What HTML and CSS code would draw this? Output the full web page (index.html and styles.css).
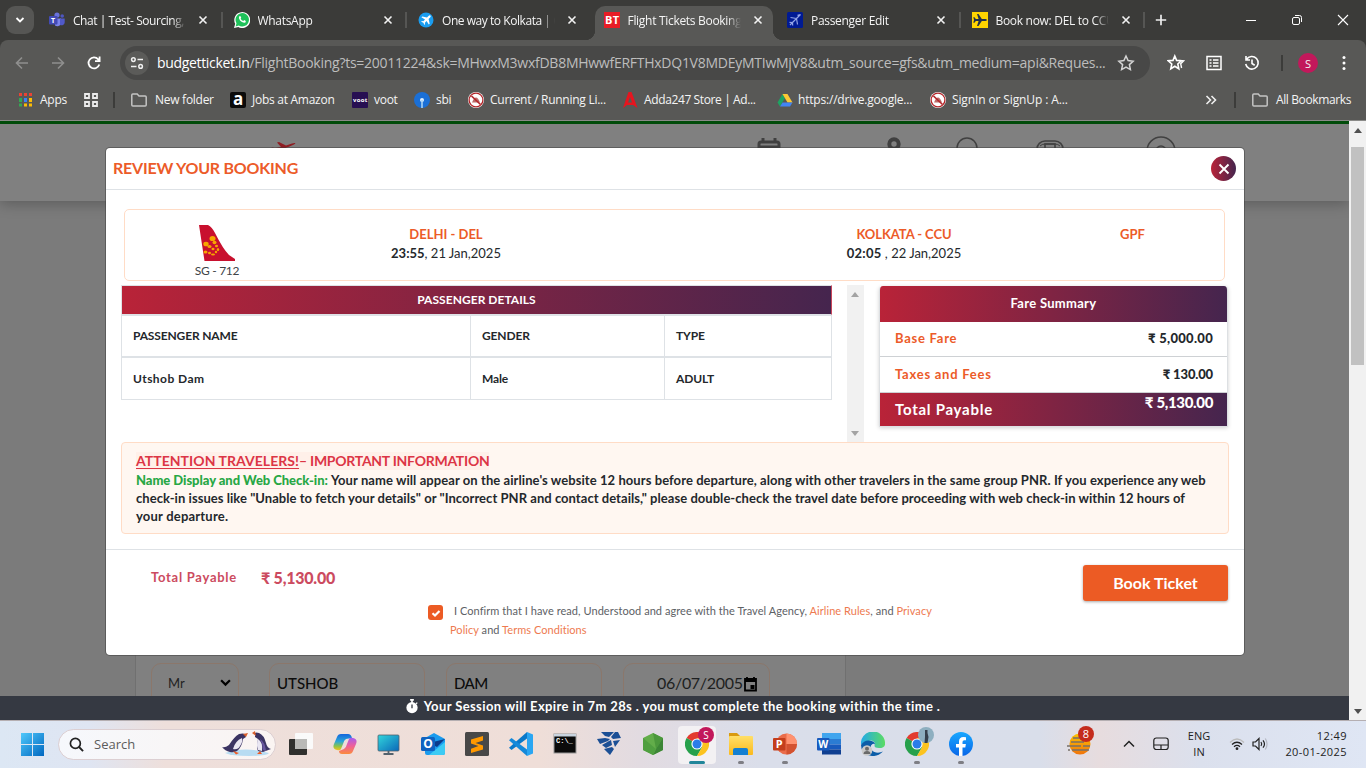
FILE: index.html
```html
<!DOCTYPE html>
<html lang="en">
<head>
<meta charset="utf-8">
<title>Flight Tickets Booking</title>
<link rel="stylesheet" href="styles.css">
</head>
<body>
<svg width="0" height="0" class="defs">
  <defs>
    <linearGradient id="gWin" x1="0" y1="0" x2="1" y2="1"><stop offset="0" stop-color="#4fc8fb"/><stop offset="1" stop-color="#0067c0"/></linearGradient>
    <linearGradient id="gPc" x1="0" y1="0" x2="1" y2="1"><stop offset="0" stop-color="#32d6dc"/><stop offset="1" stop-color="#0a67b8"/></linearGradient>
    <linearGradient id="gCopA" x1="0" y1="0" x2="0" y2="1"><stop offset="0" stop-color="#1465dd"/><stop offset=".45" stop-color="#2aa6d8"/><stop offset=".75" stop-color="#8cc34a"/><stop offset="1" stop-color="#f7c21d"/></linearGradient>
    <linearGradient id="gCopB" x1="0" y1="0" x2="0" y2="1"><stop offset="0" stop-color="#a55bf0"/><stop offset=".5" stop-color="#ee5f9a"/><stop offset="1" stop-color="#fb8c3c"/></linearGradient>
    <linearGradient id="gEdge" x1="0" y1="0" x2="1" y2="0"><stop offset="0" stop-color="#23a9e8"/><stop offset="1" stop-color="#5bdc62"/></linearGradient>
    <linearGradient id="gFolder" x1="0" y1="0" x2="0" y2="1"><stop offset="0" stop-color="#ffdf68"/><stop offset="1" stop-color="#fbb91c"/></linearGradient>
    <linearGradient id="gFb" x1="0" y1="0" x2="0" y2="1"><stop offset="0" stop-color="#19a8ff"/><stop offset="1" stop-color="#0866e8"/></linearGradient>
    <linearGradient id="gSun" x1="0" y1="0" x2="0" y2="1"><stop offset="0" stop-color="#fdc400"/><stop offset="1" stop-color="#f0740c"/></linearGradient>
    <symbol id="x" viewBox="0 0 10 10"><path d="M1.500 1.500l7 7M8.500 1.500l-7 7" stroke="#f2f2f2" stroke-width="1.600"/></symbol>
    <symbol id="folder" viewBox="0 0 16 14"><path d="M1.800 1h4.400l1.800 2h6.200q1 0 1 1v8q0 1-1 1H1.800q-1 0-1-1V2q0-1 1-1z" fill="none" stroke="#c4c4c3" stroke-width="1.500"/></symbol>
    <symbol id="ban" viewBox="0 0 16 16"><circle cx="8" cy="8" r="8" fill="#fff"/><circle cx="8" cy="8" r="6.900" fill="none" stroke="#b3262a" stroke-width="1.300"/><path d="M4 10.500q2-5 4-5t4 5z" fill="#bb6c6a"/><path d="M3.500 4l9 8.500" stroke="#b3262a" stroke-width="1.700"/></symbol>
    <symbol id="chrome" viewBox="0 0 24 24"><path d="M12 12L1.600 6A12 12 0 0 1 22.400 6z" fill="#e33b2e"/><path d="M12 12L1.600 6A12 12 0 0 0 12 24l5.200-9z" fill="#26a04b"/><path d="M12 24A12 12 0 0 0 22.400 6H12l5.200 9z" fill="#fcc31e"/><circle cx="12" cy="12" r="5.600" fill="#fff"/><circle cx="12" cy="12" r="4.500" fill="#2b7de9"/></symbol>
    <symbol id="star" viewBox="0 0 18 18"><path d="M9 2l2.100 4.600 5 .6-3.700 3.400 1 5L9 13.100l-4.400 2.500 1-5L1.900 7.200l5-.6z" fill="none" stroke="#d4d4d4" stroke-width="1.500"/></symbol>
  </defs>
</svg>

<div class="screen">
  <header class="browser">
    <div class="tabstrip">
      <div class="tab-search"><svg width="10" height="8" viewBox="0 0 10 8"><path d="M1.500 2l3.500 3.500L8.500 2" fill="none" stroke="#fff" stroke-width="1.800"/></svg></div>
      <div class="tab tight"><svg class="fav" viewBox="0 0 16 16"><circle cx="8" cy="3" r="2.600" fill="#6972dc"/><circle cx="13.200" cy="4" r="1.800" fill="#4e56c0"/><path d="M6 6.500h6v5a3.800 3.800 0 0 1-6 2z" fill="#7b83eb"/><path d="M11 6.500h4.700v4a3 3 0 0 1-4.700 2.300z" fill="#5059c9"/><rect y="4" width="8.500" height="8.500" rx="1" fill="#434bb5"/><text x="2" y="10.800" class="glyph g7">T</text></svg><span class="tab-title">Chat | Test- Sourcing,</span><svg class="tab-x"><use href="#x"/></svg></div>
      <div class="tab"><svg class="fav" viewBox="0 0 16 16"><path d="M0 16l1.200-4.200A8 8 0 1 1 4.300 15z" fill="#fff"/><path d="M1.600 14.400l.9-3.200a6.700 6.700 0 1 1 2.300 2.300z" fill="#1fc15a"/><path d="M5.300 4.300q.9-.9 1.400.3l.5 1.100-.6 1q1 1.700 2.700 2.300l.9-.9 1.600.8q.2 1.800-1.700 1.900-2.300-.1-4.100-2.200-2-2.300-.7-4.300z" fill="#fff"/></svg><span class="tab-title">WhatsApp</span><svg class="tab-x"><use href="#x"/></svg></div>
      <div class="tab nosep tight"><svg class="fav" viewBox="0 0 16 16"><circle cx="8" cy="8" r="7.500" fill="#1a9df0"/><path d="M12.500 3.500q-1-.6-2 .5L9 5.500 4.300 4.400l-.9.9L7 7.500 5.400 9.200l-1.600-.1-.6.6 2.200 1 1 2.200.6-.6-.1-1.600L8.600 9l2.200 3.600.9-.9-1.100-4.700 1.500-1.500q1.100-1 .4-2z" fill="#fff"/></svg><span class="tab-title">One way to Kolkata | C</span><svg class="tab-x"><use href="#x"/></svg></div>
      <div class="tab active nosep"><svg class="fav" viewBox="0 0 16 16"><rect width="16" height="16" fill="#e71d25"/><text x="1" y="12.300" class="glyph g11" textLength="14">BT</text></svg><span class="tab-title">Flight Tickets Booking</span><svg class="tab-x"><use href="#x"/></svg></div>
      <div class="tab"><svg class="fav" viewBox="0 0 16 16"><rect width="16" height="16" rx="1.500" fill="#001a93"/><path d="M13.500 2.500L3 13M9.500 6.500L3.500 5.500M9.500 6.500l1 6M5.500 10.500l-3-.2M5.500 10.500l.2 3M13.500 2.500l-3 .8" fill="none" stroke="#93a4e8" stroke-width="1.200"/></svg><span class="tab-title">Passenger Edit</span><svg class="tab-x"><use href="#x"/></svg></div>
      <div class="tab"><svg class="fav" viewBox="0 0 16 16"><rect width="16" height="16" fill="#ffd400"/><path d="M15 8q-.3-1-1.800-1H9.800L6.500 2H5l1.600 5H3.800L2.500 5.300H1.300L2 8l-.7 2.700h1.200L3.800 9h2.800L5 14h1.500l3.300-5h3.400Q14.700 9 15 8z" fill="#23304a"/></svg><span class="tab-title">Book now: DEL to CCU</span><svg class="tab-x"><use href="#x"/></svg></div>
      <svg class="new-tab" viewBox="0 0 12 12"><path d="M6 .8v10.400M.8 6h10.400" stroke="#eee" stroke-width="1.700"/></svg>
      <div class="win-controls">
        <svg viewBox="0 0 12 12"><path d="M1 6.500h10" stroke="#fff"/></svg>
        <svg viewBox="0 0 12 12"><rect x="1.500" y="3.500" width="7" height="7" rx="1.500" fill="none" stroke="#fff"/><path d="M4 1.500h4.500a2 2 0 0 1 2 2V8" fill="none" stroke="#fff"/></svg>
        <svg viewBox="0 0 12 12"><path d="M1 1l10 10M11 1L1 11" stroke="#fff" stroke-width="1.100"/></svg>
      </div>
    </div>

    <div class="toolbar">
      <div class="nav">
        <svg viewBox="0 0 16 16"><path d="M14 8H3M8 2.500L2.500 8 8 13.500" fill="none" stroke="#8f8f8e" stroke-width="1.600"/></svg>
        <svg viewBox="0 0 16 16"><path d="M2 8h11M8 2.500L13.500 8 8 13.500" fill="none" stroke="#8f8f8e" stroke-width="1.600"/></svg>
        <svg viewBox="0 0 16 16"><path d="M13.300 9.500A5.500 5.500 0 1 1 12.200 4.300L13.500 5.600M13.600 1.500v4.600H9" fill="none" stroke="#fff" stroke-width="1.800"/></svg>
      </div>
      <div class="omnibox">
        <span class="site-info"><svg viewBox="0 0 14 14"><g fill="none" stroke="#f0f0f0" stroke-width="1.500"><circle cx="3.400" cy="3.600" r="1.800"/><path d="M7.500 3.600H13M1 10.400h5.500"/><circle cx="10.600" cy="10.400" r="1.800"/></g></svg></span>
        <span class="url"><b>budgetticket.in</b><span>/FlightBooking?ts=20011224&amp;sk=MHwxM3wxfDB8MHwwfERFTHxDQ1V8MDEyMTIwMjV8&amp;utm_source=gfs&amp;utm_medium=api&amp;Reques...</span></span>
        <svg class="url-star"><use href="#star"/></svg>
      </div>
      <div class="actions">
        <svg viewBox="0 0 18 18"><path d="M7.800 2l1.800 4.400 4.700.4-3.500 3.200 1 4.700-4-2.500-4 2.500 1-4.700L1.300 6.800 6 6.400z" fill="none" stroke="#fff" stroke-width="1.600"/><path d="M12.500 6.500l4.300.3-3.100 3 .9 4.200" fill="none" stroke="#fff" stroke-width="1.400"/></svg>
        <svg viewBox="0 0 18 18"><rect x="2" y="2.500" width="14" height="13" fill="none" stroke="#fff" stroke-width="1.500"/><path d="M4.500 6h2M8 6h5.500M4.500 9h2M8 9h5.500M4.500 12h2M8 12h5.500" stroke="#fff" stroke-width="1.500"/></svg>
        <svg viewBox="0 0 18 18"><path d="M3.500 5.500A6.300 6.300 0 1 1 2.700 10M3 2v4h4M9 5.500v4l2.700 1.700" fill="none" stroke="#fff" stroke-width="1.600"/></svg>
        <i class="bar-sep"></i>
        <span class="avatar">S</span>
        <svg class="dots" viewBox="0 0 4 16"><circle cx="2" cy="2.500" r="1.500" fill="#fff"/><circle cx="2" cy="8" r="1.500" fill="#fff"/><circle cx="2" cy="13.500" r="1.500" fill="#fff"/></svg>
      </div>
    </div>

    <div class="bookmarks">
      <div class="bm bm-apps"><svg viewBox="0 0 13 14"><path d="M0 0h3v3H0zM5 0h3v3H5zM10 0h3v3h-3z" fill="#ea4335"/><path d="M0 5h3v4H0zM0 10.500h3v3H0z" fill="#34a853"/><path d="M5 5h3v4H5z" fill="#3b82f6"/><path d="M10 5h3v4h-3zM5 10.500h3v3H5zM10 10.500h3v3h-3z" fill="#fbbc05"/></svg>Apps</div>
      <div class="bm bm-grid"><svg viewBox="0 0 14 14"><path d="M1 1h4v4H1zM9 1h4v4H9zM1 9h4v4H1zM9 9h4v4H9z" fill="none" stroke="#ececec" stroke-width="1.800"/></svg><i class="bar-sep"></i></div>
      <div class="bm bm-fold"><svg><use href="#folder"/></svg>New folder</div>
      <div class="bm"><svg viewBox="0 0 16 16"><rect width="16" height="16" rx="2" fill="#0b0b0b"/><text x="3" y="13" class="glyph g18">a</text></svg>Jobs at Amazon</div>
      <div class="bm"><svg viewBox="0 0 16 16"><rect width="16" height="16" rx="1" fill="#270f52"/><text x="1" y="10" class="glyph g6" textLength="14">voot</text></svg>voot</div>
      <div class="bm"><svg viewBox="0 0 16 16"><circle cx="8" cy="8" r="8" fill="#1a6fd6"/><circle cx="8" cy="8" r="2" fill="#dff0ff"/><path d="M8 8v8" stroke="#a7d4f7" stroke-width="1.600"/></svg>sbi</div>
      <div class="bm"><svg><use href="#ban"/></svg>Current / Running Li...</div>
      <div class="bm bm-adda"><svg viewBox="0 0 16 16"><path d="M6.500 0h3L15.500 16l-4.500-3H5l-4 3z" fill="#e6151f"/><path d="M8 5l2 5.500H6z" fill="#585856"/></svg>Adda247 Store | Ad...</div>
      <div class="bm bm-drive"><svg viewBox="0 0 16 16"><path d="M5.500 2L.5 10.500 3 14.500 8 6z" fill="#1da462"/><path d="M5.500 2h5l5 8.500h-5z" fill="#fcc934"/><path d="M3 14.500l2.500-4h10l-2.500 4z" fill="#4285f4"/></svg>https://drive.google...</div>
      <div class="bm bm-sign"><svg><use href="#ban"/></svg>SignIn or SignUp : A...</div>
      <div class="bm bm-more"><svg viewBox="0 0 12 10"><path d="M1.500 1l4 4-4 4M6.500 1l4 4-4 4" fill="none" stroke="#eee" stroke-width="1.600"/></svg><i class="bar-sep"></i></div>
      <div class="bm bm-fold all"><svg><use href="#folder"/></svg>All Bookmarks</div>
    </div>
  </header>

  <main class="viewport">
    <div class="page">
      <div class="site-header">
        <svg class="brand" viewBox="0 0 30 16"><path d="M7 1.500l2-.5 7 3.500 6-2q3-.8 3.500-.2-1 1.200-6 3.200L10 9 0 8l2-1.500 3 .5 6-1z" fill="#8e1d22"/></svg>
        <svg class="hi hi1" viewBox="0 0 24 20"><path d="M6 0v5M18 0v5" stroke="#404040" stroke-width="3"/><rect x="2" y="4" width="20" height="18" rx="2" fill="none" stroke="#404040" stroke-width="3"/><path d="M2 9h20" stroke="#404040" stroke-width="3"/></svg>
        <svg class="hi hi2" viewBox="0 0 14 20"><circle cx="7" cy="7" r="4.700" fill="none" stroke="#404040" stroke-width="4"/></svg>
        <svg class="hi hi3" viewBox="0 0 24 24"><circle cx="12" cy="11" r="10" fill="none" stroke="#404040" stroke-width="1.500"/></svg>
        <svg class="hi hi4" viewBox="0 0 28 20"><rect x="1" y="1" width="26" height="22" rx="8" fill="none" stroke="#404040" stroke-width="1.600"/><rect x="9" y="4" width="10" height="16" fill="none" stroke="#404040" stroke-width="1.600"/><path d="M4 6q2-2 5-2h10q3 0 5 2" fill="none" stroke="#404040"/></svg>
        <svg class="hi hi5" viewBox="0 0 30 26"><circle cx="15" cy="15" r="14" fill="none" stroke="#404040" stroke-width="1.500"/><circle cx="15" cy="15" r="5" fill="none" stroke="#404040" stroke-width="1.500"/></svg>
      </div>
      <div class="traveller-form">
        <div class="field f-title">Mr<svg viewBox="0 0 10 7"><path d="M1 1l4 4 4-4" fill="none" stroke="#000" stroke-width="2"/></svg></div>
        <div class="field f-first">UTSHOB</div>
        <div class="field f-last">DAM</div>
        <div class="field f-dob">06/07/2005<svg viewBox="0 0 14 16"><path d="M1.500 3h11v11.500h-11zM1 5h12M3.500 1v3M10.500 1v3" fill="none" stroke="#000" stroke-width="1.800"/><rect x="7" y="9" width="4" height="4"/></svg></div>
      </div>
      <div class="session"><svg viewBox="0 0 14 16"><circle cx="7" cy="9.200" r="6" fill="#fff"/><path d="M5 1h4M7 1v3M11.500 4l1 1" stroke="#fff" stroke-width="1.800"/><path d="M7 5.800v4" stroke="#353942" stroke-width="1.400"/></svg>Your Session will Expire in 7m 28s . you must complete the booking within the time .</div>

      <section class="modal">
        <div class="modal-head"><h1>REVIEW YOUR BOOKING</h1><span class="close"><svg viewBox="0 0 12 12"><path d="M1.500 1.500l9 9M10.500 1.500l-9 9" stroke="#fff" stroke-width="1.900"/></svg></span></div>
        <div class="modal-body">
          <div class="flight">
            <div class="airline">
              <svg viewBox="0 0 36 36"><path d="M0 0h9q4 2 7 8 8 16 14 22l6 4v2H5.500z" fill="#c8102e"/><g fill="#f7a600"><ellipse cx="13.500" cy="13.500" rx="3" ry="2.600"/><ellipse cx="7" cy="19" rx="2.700" ry="2.300"/><ellipse cx="15.500" cy="17.500" rx="2" ry="1.700"/><ellipse cx="10.500" cy="21.500" rx="2" ry="1.600"/><ellipse cx="17.500" cy="21" rx="1.500" ry="1.300"/><ellipse cx="14" cy="24" rx="1.500" ry="1.300"/><ellipse cx="6.500" cy="27" rx="2" ry="1.600"/><ellipse cx="19" cy="24.500" rx="1.200" ry="1.500"/><ellipse cx="10.500" cy="28" rx="1.500" ry="1.200"/><ellipse cx="17" cy="27" rx="1.200" ry="1.200"/><ellipse cx="14" cy="29.500" rx="2" ry="1"/></g></svg>
              <span>SG - 712</span>
            </div>
            <div class="leg depart"><b>DELHI - DEL</b><span><strong>23:55</strong>, 21 Jan,2025</span></div>
            <div class="leg arrive"><b>KOLKATA - CCU</b><span><strong>02:05</strong> , 22 Jan,2025</span></div>
            <div class="leg fare-type"><b>GPF</b></div>
          </div>

          <div class="details">
            <div class="pax">
              <div class="pax-head">PASSENGER DETAILS</div>
              <div class="pax-row head"><span>PASSENGER NAME</span><span>GENDER</span><span>TYPE</span></div>
              <div class="pax-row"><span class="loose">Utshob Dam</span><span>Male</span><span>ADULT</span></div>
            </div>
            <div class="inner-scroll"><i class="up"></i><i class="down"></i></div>
            <div class="fare">
              <div class="fare-head">Fare Summary</div>
              <div class="fare-row"><span>Base Fare</span><b class="wide">₹ 5,000.00</b></div>
              <div class="fare-row"><span>Taxes and Fees</span><b>₹ 130.00</b></div>
              <div class="fare-total"><span>Total Payable</span><b>₹ 5,130.00</b></div>
            </div>
          </div>

          <div class="notice">
            <h2><span><u>ATTENTION TRAVELERS!</u><em>– IMPORTANT INFORMATION</em></span></h2>
            <p><b>Name Display and Web Check-in:</b> <span>Your name will appear on the airline's website 12 hours before departure, along with other travelers in the same group PNR. If you experience any web</span><br>check-in issues like "Unable to fetch your details" or "Incorrect PNR and contact details," please double-check the travel date before proceeding with web check-in within 12 hours of<br><span class="last">your departure.</span></p>
          </div>
        </div>
        <div class="modal-foot">
          <div class="pay"><span>Total Payable</span><b>₹ 5,130.00</b></div>
          <div class="agree">
            <span class="check"><svg viewBox="0 0 10 10"><path d="M1.500 5.200l2.500 2.300L8.500 3" fill="none" stroke="#fff" stroke-width="2.200"/></svg></span>
            <p><i></i>I Confirm that I have read, Understood and agree with the Travel Agency, <a>Airline Rules</a>, and <a>Privacy</a><br><a>Policy</a> and <a>Terms Conditions</a></p>
          </div>
          <div class="book">Book Ticket</div>
        </div>
      </section>
    </div>
    <div class="page-scroll"><i class="up"></i><i class="thumb"></i><i class="down"></i></div>
  </main>

  <footer class="taskbar">
    <svg class="start" viewBox="0 0 23 23"><path d="M0 0h11v11H0zM12 0h11v11H12zM0 12h11v11H0zM12 12h11v11H12z" fill="url(#gWin)"/></svg>
    <div class="search"><svg class="lens" viewBox="0 0 16 16"><circle cx="6.800" cy="6.800" r="5.300" fill="none" stroke="#222" stroke-width="1.800"/><path d="M10.700 10.700L15 15" stroke="#222" stroke-width="2"/></svg><span>Search</span>
      <svg class="penguins" viewBox="0 0 50 26"><path d="M3 22q20-7 44 0-2 3-20 3-18 0-24-3z" fill="#b8dcf2"/><path d="M0 16q3 1 7-2 5-8 10-11 4-1 6 0l1 3-3 2q-1 8-6 12-4 2-7 1-5-1-8-5z" fill="#3b3463"/><path d="M20 7q-7 3-9 11 5 1 7-3 3-4 2-8z" fill="#e9e6f2"/><path d="M21 3l5-1-2 4z" fill="#d95f2b"/><path d="M11 20l6 2-3 1.500zM38 20l-3 3h5z" fill="#ef5b25"/><path d="M49 18q-4-1-5-6-2-8-7-10-3-1-4 0v4l3 2q-2 9 0 12l5 1z" fill="#3b3463"/><path d="M36 8q5 3 4 12l-4-1q-2-5 0-11z" fill="#e9e6f2"/><path d="M38 8q5 3 6 12l-3-1q0-6-3-11z" fill="#6956a0"/><path d="M34 5l-4-3 3-2z" fill="#d95f2b"/></svg>
    </div>
    <div class="apps">
      <span class="app"><svg viewBox="0 0 24 24"><rect x="6" y="1" width="18" height="16" rx="1" fill="#fafafa"/><rect y="7" width="18" height="16" rx="1" fill="#30302e"/><rect x="6" y="7" width="12" height="10" fill="#b9b9b7"/></svg></span>
      <span class="app"><svg viewBox="0 0 24 24"><path d="M8 2h7q3 0 4 4l-6 1q-2 1-3 5l-2 5q-1 2-4 1-5-1-3-6l3-7q1-3 4-3z" fill="url(#gCopA)"/><path d="M16 22H9q-3 0-3-3l5-2q2-1 3-5l2-5q1-2 4-1 5 1 3 6l-3 7q-1 3-4 3z" fill="url(#gCopB)"/></svg></span>
      <span class="app"><svg viewBox="0 0 24 24"><rect x="1" y="3" width="21" height="16" rx="1" fill="url(#gPc)" stroke="#53616c" stroke-width=".8"/><path d="M11.500 19v3M6.500 22h10" stroke="#53616c" stroke-width="1.800"/></svg></span>
      <span class="app"><svg viewBox="0 0 24 24"><path d="M4 6l9-5 11 6v14q0 2-2 2H6q-2 0-2-2z" fill="#1a9bee"/><path d="M8 11l16-4-8 8z" fill="#0b3c8c"/><path d="M8 23l16-13v11q0 2-2 2z" fill="#3ccbf4"/><rect y="5" width="14" height="14" rx="1.500" fill="#0f63c0"/><text x="2.300" y="16.300" class="glyph g12">O</text></svg></span>
      <span class="app"><svg viewBox="0 0 24 24"><rect width="24" height="24" rx="1.500" fill="#484848"/><path d="M18 4v4.500L10.500 11l7.500 2.500v4L6 21v-4.300l7.500-2.600L6 11.600V7.500z" fill="#ff9800"/></svg></span>
      <span class="app"><svg viewBox="0 0 24 24"><path d="M18 0l6 2.500v19L18 24V0z" fill="#2aa6f2"/><path d="M18 0v6.500L2.500 18 0 15.800z" fill="#0a79c9"/><path d="M18 24v-6.500L2.500 6 0 8.200z" fill="#1489da"/></svg></span>
      <span class="app"><svg viewBox="0 0 24 24"><rect x="1" y="2" width="22" height="19" fill="#0b0b0b" stroke="#989898"/><path d="M1 2h22v2.500H1z" fill="#c9d4df"/><text x="3" y="11" class="glyph mono">C:\_</text></svg></span>
      <span class="app"><svg viewBox="0 0 24 24"><path d="M4 0h13l-5 5-4-1zM18 0h3l3 6-8 1-2-2zM0 7l8-1 5 1-2 2-8 3zM12 9l2-1 1 5-6 3-4-3zM16 9l7-1-5 7zM7 17l8-2 2 2-4 6z" fill="#1b4f95"/></svg></span>
      <span class="app"><svg viewBox="0 0 24 24"><path d="M12 1l10 5v12l-10 5-10-5V6z" fill="#62ad4a"/><path d="M12 1l10 5-7 11z" fill="#4b983c"/><path d="M22 6v12l-10 5 3-6z" fill="#3c8636"/><path d="M2 6l13 11-3 6-10-5z" fill="#4f9f40"/></svg></span>
      <span class="app current"><svg><use href="#chrome"/></svg><em class="pin">S</em></span>
      <span class="app open"><svg viewBox="0 0 24 24"><path d="M0 1h8l3 3v4H0z" fill="#d99a10"/><rect y="4" width="24" height="19" rx="1" fill="url(#gFolder)"/><path d="M4 23v-5q0-2 2-2h11q2 0 2 2v5z" fill="#1480d2"/></svg></span>
      <span class="app open"><svg viewBox="0 0 24 24"><circle cx="13.500" cy="12" r="10.500" fill="#ea6c4a"/><path d="M13.500 1.500A10.500 10.500 0 0 1 24 12H13.500z" fill="#ff9270"/><path d="M13.500 12H24a10.500 10.500 0 0 1-10.500 10.500z" fill="#d35230"/><rect y="6" width="12.500" height="12.500" rx="1" fill="#c43e1c"/><text x="2.800" y="16" class="glyph g11">P</text></svg></span>
      <span class="app"><svg viewBox="0 0 24 24"><rect x="5" y="1" width="19" height="6" fill="#41a5ee"/><rect x="5" y="7" width="19" height="5.500" fill="#2b7cd3"/><rect x="5" y="12.500" width="19" height="5" fill="#185abd"/><rect x="5" y="17.500" width="19" height="5" fill="#103f91"/><rect y="6" width="12.500" height="12.500" rx="1" fill="#185abd"/><text x="1.300" y="15.800" class="glyph g11" textLength="10" lengthAdjust="spacingAndGlyphs">W</text></svg></span>
      <span class="app"><svg viewBox="0 0 24 24"><path d="M0 13A12 12 0 0 1 24 10q1 6-6 6-6 0-4-4-1-5-7-3-5 1-7 4z" fill="url(#gEdge)"/><path d="M0 13q3-5 8-4.500 6 .5 6 4-2-2-4 1-1 6 5 7 4 .500 7-1-5 5-11 4.500Q0 23 0 13z" fill="#0c5da8"/><circle cx="6" cy="18.500" r="5.300" fill="#c9c9c9"/><circle cx="6" cy="16.800" r="2" fill="#6a6a6a"/><path d="M2.500 22q0-3 3.500-3t3.500 3z" fill="#6a6a6a"/></svg></span>
      <span class="app open"><svg><use href="#chrome"/></svg><em class="pin photo"><svg viewBox="0 0 16 16"><path d="M7 3h2.500v3l1 4-1 6H6.500l.5-6z" fill="#36404c"/></svg></em></span>
      <span class="app open"><svg viewBox="0 0 24 24"><circle cx="12" cy="12" r="12" fill="url(#gFb)"/><path d="M10 24v-8.500H7V12h3V9.500Q10 5 14.500 5l2.500.2v3h-1.700q-1.800 0-1.800 1.800v2h3.400l-.6 3.500h-2.800V24z" fill="#fff"/></svg></span>
    </div>
    <div class="tray">
      <span class="weather"><svg viewBox="0 0 24 24"><circle cx="13" cy="12" r="10.500" fill="url(#gSun)"/><path d="M6 6h10M4 10h13M0 14h14M6 14M5 18h17M1 18h2M16 14h7" stroke="#77706a" stroke-width="1.700"/></svg><em>8</em></span>
      <svg class="chev" viewBox="0 0 12 8"><path d="M1 6.500l5-5 5 5" fill="none" stroke="#222" stroke-width="1.500"/></svg>
      <svg class="pad" viewBox="0 0 16 14"><rect x=".8" y="1" width="14.400" height="11.500" rx="2.500" fill="none" stroke="#222" stroke-width="1.200"/><path d="M1 8h14M8 8v4.500" stroke="#222" stroke-width="1.200"/></svg>
      <div class="lang">ENG<br>IN</div>
      <svg class="wifi" viewBox="0 0 16 14"><path d="M1 5.500q7-7 14 0" fill="none" stroke="#bbb" stroke-width="1.200"/><path d="M3 7.500q5-4.500 10 0M5 9.700q3-2.500 6 0" fill="none" stroke="#222" stroke-width="1.300"/><circle cx="8" cy="11.700" r="1.400" fill="#222"/></svg>
      <svg class="vol" viewBox="0 0 16 14"><path d="M1 5h2.500L7 1.500v11L3.500 9H1z" fill="none" stroke="#222" stroke-width="1.200"/><path d="M9 5q1.500 2 0 4M11 3.300q3 3.700 0 7.400" fill="none" stroke="#222" stroke-width="1.200"/><path d="M13.300 1.500q3.500 5.500 0 11" fill="none" stroke="#b5b8c2" stroke-width="1.200"/></svg>
      <div class="clock">12:49<br>20-01-2025</div>
    </div>
  </footer>
</div>
</body>
</html>
```
FILE: styles.css
```css
* { box-sizing: border-box; }
body { margin: 0; }
svg { display: block; flex: none; }
.defs { position: absolute; }
i, em { font-style: normal; }
.screen { width: 1366px; height: 768px; overflow: hidden; display: flex; flex-direction: column; font-family: "Open Sans", "Noto Sans", sans-serif; font-size: 12px; }
.glyph { font-family: "Open Sans", sans-serif; font-weight: 700; fill: #fff; }
.g6 { font-size: 6px; }
.g7 { font-size: 7px; }
.g11 { font-size: 11px; }
.g12 { font-size: 12px; }
.g18 { font-size: 17px; }
.mono { font-family: "Liberation Mono", monospace; font-size: 7px; }

/* browser chrome */
.browser { height: 121px; flex: none; background: #3b3b39; color: #f4f4f4; }
.tabstrip { height: 40px; display: flex; align-items: center; padding-left: 6px; }
.tab-search { width: 28px; height: 28px; margin-right: 4px; border-radius: 9px; background: #565654; display: grid; place-items: center; }
.tab { width: 184.5px; height: 40px; padding-left: 11px; display: flex; align-items: center; position: relative; }
.tab::after { content: ""; position: absolute; right: 0; top: 12px; width: 2px; height: 16px; background: #565654; }
.tab.nosep::after { display: none; }
.tab.active { padding-left: 12px; }
.fav { width: 16px; height: 16px; position: relative; }
.tab-title { width: 113px; margin-left: 8px; overflow: hidden; position: relative; white-space: nowrap; letter-spacing: -.3px; -webkit-mask-image: linear-gradient(90deg, #000 88%, transparent); mask-image: linear-gradient(90deg, #000 88%, transparent); }
.tight .tab-title { letter-spacing: -.45px; }
.tab-x { width: 10px; height: 10px; margin-left: 12px; position: relative; }
.tab.active { z-index: 0; }
.tab.active::before { content: ""; position: absolute; z-index: -1; left: 3px; right: 3px; top: 6px; bottom: 0; background: #585856; border-radius: 10px 10px 0 0; }
.tab.active::after { display: block; left: -7px; right: -7px; top: 30px; width: auto; height: 10px; z-index: -1; background: radial-gradient(circle at 0 0, transparent 10px, #585856 10.5px) left / 10px 10px no-repeat, radial-gradient(circle at 100% 0, transparent 10px, #585856 10.5px) right / 10px 10px no-repeat; }
.new-tab { width: 12px; height: 12px; margin-left: 10px; }
.win-controls { margin-left: auto; display: flex; gap: 34px; padding-right: 17px; }
.win-controls svg { width: 12px; height: 12px; }
.toolbar { height: 44px; background: #585856; border-radius: 8px 8px 0 0; display: flex; align-items: center; padding-top: 2px; }
.nav { width: 120px; display: flex; gap: 20px; padding-left: 14px; }
.nav svg { width: 16px; height: 16px; }
.omnibox { width: 1030px; height: 34px; border-radius: 17px; background: #484847; display: flex; align-items: center; padding: 0 15px 0 5px; }
.site-info { width: 24px; height: 24px; border-radius: 50%; background: #5b5b59; display: grid; place-items: center; }
.site-info svg { width: 14px; height: 14px; }
.url { margin-left: 8px; padding-bottom: 1px; font-size: 14px; white-space: nowrap; color: #bdbdbd; letter-spacing: -.26px; display: flex; }
.url b { font-weight: 400; color: #fff; letter-spacing: -.33px; }
.url-star { width: 18px; height: 18px; margin-left: auto; }
.actions { display: flex; align-items: center; flex: 1; padding-left: 17px; }
.actions svg { width: 18px; height: 18px; margin-right: 20px; }
.bar-sep { width: 2px; height: 16px; background: #3c3c3a; }
.avatar { width: 20px; height: 20px; margin: 0 0 0 15px; border-radius: 50%; background: #c2185b; display: grid; place-items: center; font-size: 11px; }
.actions .dots { width: 4px; height: 16px; margin: 0 0 0 24px; }
.bookmarks { height: 37px; padding: 0 0 5px 19px; background: #585856; border-bottom: 1px solid #8a8a88; display: grid; grid-template-columns: 65px 47px 99px 122px 62px 54px 154px 155px 153px 275px 47px 1fr; align-items: center; letter-spacing: -.27px; white-space: nowrap; }
.bm { display: flex; align-items: center; gap: 6px; }
.bm svg { width: 16px; height: 16px; }
.bm-apps { gap: 8px; }
.bm-apps svg { width: 13px; height: 14px; }
.bm-grid { gap: 15px; }
.bm-grid svg { width: 14px; height: 14px; }
.bm-fold { gap: 8px; }
.bm-fold svg { height: 14px; }
.bm-adda { letter-spacing: -.38px; }
.bm-drive { gap: 5px; letter-spacing: -.2px; }
.bm-sign { letter-spacing: -.12px; }
.bm-more { gap: 17px; }
.bm-more svg { width: 12px; height: 10px; }
.all { letter-spacing: -.38px; }

/* page */
.viewport { height: 599px; flex: none; display: flex; }
.page { width: 1349px; position: relative; overflow: hidden; background: #7b7b7b; border-top: 3px solid #004b09; font-family: Lato, "Noto Sans", sans-serif; display: flex; flex-direction: column; }
.site-header { height: 77px; flex: none; background: #808080; box-shadow: 0 2px 14px rgba(0, 0, 0, .28); display: flex; align-items: flex-start; }
.brand { width: 30px; height: 16px; margin: 17px 0 0 270px; }
.hi1 { width: 24px; height: 20px; margin: 14px 0 0 457px; }
.hi2 { width: 14px; height: 20px; margin: 13px 0 0 106px; }
.hi3 { width: 24px; height: 24px; margin: 13px 0 0 54px; }
.hi4 { width: 28px; height: 20px; margin: 16px 0 0 57px; }
.hi5 { width: 30px; height: 26px; margin: 12px 0 0 82px; }
.traveller-form { width: 711px; height: 140px; flex: none; margin: 431px 0 0 135px; padding: 30px 0 0 15px; background: #808080; border: 1px solid #707070; display: flex; color: #0c0c0c; font-size: 15px; font-weight: 700; }
.session { position: absolute; left: 0; right: 0; bottom: 0; height: 24px; padding: 0 4px 4px 0; background: #353942; color: #fff; display: flex; justify-content: center; align-items: center; gap: 5px; font-size: 13px; font-weight: 700; letter-spacing: .39px; }
.session svg { width: 14px; height: 15px; }
.field { height: 46px; border: 1px solid #8b776b; border-radius: 10px; display: flex; align-items: center; padding-bottom: 7px; font-weight: 500; }
.f-title { width: 88px; padding-left: 16px; justify-content: space-between; padding-right: 7px; font-size: 13px; font-weight: 400; color: #222; }
.f-title svg { width: 11px; height: 8px; }
.f-first { width: 156px; margin-left: 30px; padding-left: 7px; }
.f-last { width: 156px; margin-left: 21px; padding-left: 7px; letter-spacing: -.5px; }
.f-dob { width: 147px; margin-left: 21px; padding-left: 33px; font-size: 16px; font-weight: 400; letter-spacing: -.3px; color: #1d1f21; }
.f-dob svg { width: 15px; height: 16px; margin-top: 3px; }

/* modal */
.modal { position: absolute; left: 106px; top: 24px; width: 1138px; height: 507px; background: #fff; border-radius: 4px; box-shadow: 0 0 0 1px rgba(60, 60, 60, .5); color: #24282c; }
.modal-head { height: 42px; border-bottom: 1px solid #dee2e6; display: flex; align-items: center; justify-content: space-between; padding: 0 8px 0 7px; }
h1 { margin: 0 0 2px; font-size: 16px; line-height: 20px; letter-spacing: -.22px; color: #ec5b29; }
.close { width: 25px; height: 25px; border-radius: 50%; background: linear-gradient(90deg, #b92338, #45254e); display: grid; place-items: center; }
.close svg { width: 12px; height: 12px; }
.modal-body { padding: 19px 15px 0; height: 359px; }
.flight { width: 1101px; height: 72px; margin: 0 0 4px 3px; border: 1px solid #ffdcc6; border-radius: 5px; display: grid; grid-template-columns: 184px 274px 184px 274px 183px; }
.airline { padding-top: 15px; text-align: center; font-size: 12px; line-height: 19px; letter-spacing: -.3px; color: #404448; }
.airline svg { width: 36px; height: 36px; margin: 0 auto; }
.leg { padding-top: 15px; display: flex; flex-direction: column; align-items: center; font-size: 13px; line-height: 19px; white-space: nowrap; }
.leg b { color: #ec5b29; }
.arrive { grid-column: 4; }
.arrive b { letter-spacing: -.08px; }
.arrive strong { letter-spacing: .25px; }
.details { height: 157px; display: flex; }
.pax { width: 711px; font-size: 12px; font-weight: 700; }
.pax-head { height: 30px; border: 1px solid #dee2e6; border-right-color: #c9455a; background: linear-gradient(90deg, #b92338, #45254e); color: #fff; text-align: center; line-height: 28px; letter-spacing: .04px; }
.pax-row { height: 42px; border: 1px solid #dee2e6; border-top-width: 0; display: grid; grid-template-columns: 349px 194px 1fr; align-items: stretch; }
.pax-row.head { height: 43px; border-top-width: 1px; border-bottom-width: 2px; }
.pax-row span { padding-left: 11px; line-height: 41px; border-right: 1px solid #dee2e6; letter-spacing: -.15px; }
.pax-row.head span { line-height: 39px; }
.pax-row span:last-child { border: 0; }
.pax-row .loose { letter-spacing: .45px; }
.inner-scroll { width: 17px; margin-left: 15px; background: #f1f1f1; display: flex; flex-direction: column; justify-content: space-between; align-items: center; padding: 7px 1px 6px 0; }
.up, .down { border: 4px solid transparent; border-top: 0; border-bottom: 5px solid #a3a3a3; width: 0; height: 0; }
.down { border-bottom: 0; border-top: 5px solid #a3a3a3; }
.fare { width: 349px; height: 141px; margin: 1px 0 0 15px; border: 1px solid #dde0e3; border-top: 0; border-radius: 4px 4px 0 0; overflow: hidden; box-shadow: 0 1px 4px rgba(0, 0, 0, .18); font-size: 13px; font-weight: 700; }
.fare-head { height: 36px; line-height: 34px; text-align: center; background: linear-gradient(90deg, #b92338, #45254e); color: #fff; letter-spacing: .3px; }
.fare-row { height: 35px; padding: 0 14px 0 15px; display: flex; justify-content: space-between; border-bottom: 1px solid #ced1d4; line-height: 33px; }
.fare-row + .fare-row { height: 36px; line-height: 34px; }
.fare-row span { color: #ec5b29; letter-spacing: .75px; }
.fare-row b { letter-spacing: -.15px; }
.fare-row .wide { letter-spacing: .3px; }
.fare-total { height: 34px; padding: 0 14px 0 15px; display: flex; justify-content: space-between; background: linear-gradient(90deg, #b92338, #45254e); color: #fff; font-size: 15px; line-height: 33px; }
.fare-total span { letter-spacing: .74px; }
.fare-total b { line-height: 18px; letter-spacing: -.34px; }
.notice { height: 92px; border: 1px solid #ffdcc6; border-radius: 4px; background: #fff7f1; padding: 9px 0 0 14px; }
h2 { margin: 0; font-size: 14px; line-height: 18px; color: #dc3545; }
h2 span { display: inline-block; background: #fff0e9; }
h2 em { letter-spacing: -.27px; }
h2 u { letter-spacing: .05px; text-underline-offset: 2px; }
.notice p { margin: 1px 0 0; font-size: 13px; line-height: 18px; font-weight: 700; letter-spacing: .043px; white-space: nowrap; }
.notice p b { color: #28a745; letter-spacing: -.05px; }
.notice p span { letter-spacing: .075px; }
.notice p .last { letter-spacing: .2px; }
.modal-foot { height: 106px; border-top: 1px solid #dee2e6; display: grid; grid-template-columns: 322px 655px 145px; }
.pay { padding: 15px 0 0 45px; display: flex; font-size: 13px; line-height: 25px; font-weight: 700; color: #cc4b60; }
.pay span { width: 110px; letter-spacing: .73px; }
.pay b { font-size: 16px; letter-spacing: -.23px; }
.agree { display: flex; padding-top: 51px; gap: 7px; }
.check { width: 15px; height: 15px; margin-top: 4px; border-radius: 3px; background: #ec5b24; display: grid; place-items: center; }
.check svg { width: 10px; height: 10px; }
.agree p { margin: 0; font-size: 11px; line-height: 19px; letter-spacing: .05px; color: #5d6165; }
.agree p i { display: inline-block; width: 4px; }
.agree a { color: #ee7a50; }
.book { height: 36px; margin-top: 15px; border-radius: 3px; background: #ec5b24; box-shadow: 0 1px 3px rgba(0, 0, 0, .35); color: #fff; text-align: center; font-size: 16px; font-weight: 700; line-height: 35px; }
.page-scroll { width: 17px; background: #f1f1f1; display: flex; flex-direction: column; align-items: center; padding: 7px 0 6px; }
.page-scroll .up { border-bottom-color: #505050; }
.page-scroll .thumb { width: 13px; height: 218px; margin-top: 14px; background: #c1c1c1; }
.page-scroll .down { margin-top: auto; border-top-color: #505050; }

/* taskbar */
.taskbar { height: 48px; flex: none; border-top: 1px solid #b5afb2; background: linear-gradient(90deg, #dce7f4 0, #dfe5f2 90px, #eedfdb 165px, #efded8 540px, #e2dbe1 640px, #dadeea 760px, #d9deea 1040px, #e7dcde 1100px, #dbe0ed 1200px, #dfe6f4 1366px); display: flex; align-items: center; color: #222; }
.start { width: 23px; height: 23px; margin-left: 21px; }
.search { width: 218px; height: 31px; margin: 0 0 1px 14px; border-radius: 16px; background: linear-gradient(90deg, #f6f8fc, #faf4f2); border: 1px solid #dccfd2; display: flex; align-items: center; padding: 0 3px 0 10px; font-size: 13px; color: #5c5c5c; }
.lens { width: 15px; height: 15px; margin-right: 10px; }
.penguins { width: 50px; height: 26px; margin-left: auto; }
.apps { display: flex; margin: 0 0 1px 3px; }
.app { width: 44px; height: 47px; display: grid; place-items: center; position: relative; }
.app > svg { width: 24px; height: 24px; }
.open::after, .current::after { content: ""; position: absolute; bottom: 4px; left: 19px; width: 6px; height: 3px; border-radius: 2px; background: #7e7e84; }
.current::before { content: ""; position: absolute; left: 3px; top: 5px; width: 38px; height: 38px; border-radius: 4px; background: #f3f1f3; }
.current > svg { position: relative; }
.current::after { left: 14px; width: 16px; background: #21869a; }
.pin { position: absolute; left: 23px; top: 6px; width: 16px; height: 16px; border-radius: 50%; background: #c2185b; color: #fff; font-size: 10px; line-height: 16px; text-align: center; }
.photo { background: #8eafc0; }
.tray { margin-left: auto; display: flex; align-items: center; padding: 0 19px 1px 0; }
.weather { position: relative; margin-right: 32px; }
.weather svg { width: 24px; height: 24px; }
.weather em { position: absolute; left: 11px; top: -6px; width: 16px; height: 16px; border-radius: 50%; background: #c42b1c; color: #fff; font-size: 11px; line-height: 16px; text-align: center; }
.chev { width: 12px; height: 8px; margin-right: 18px; }
.pad { width: 16px; height: 14px; margin-right: 18px; }
.lang { width: 24px; text-align: center; font-size: 11px; line-height: 16px; }
.wifi { width: 16px; height: 14px; margin: 0 7px 0 18px; }
.vol { width: 16px; height: 14px; margin-right: 17px; }
.clock { width: 62px; text-align: right; font-size: 11px; line-height: 16px; letter-spacing: .42px; white-space: nowrap; }
```
